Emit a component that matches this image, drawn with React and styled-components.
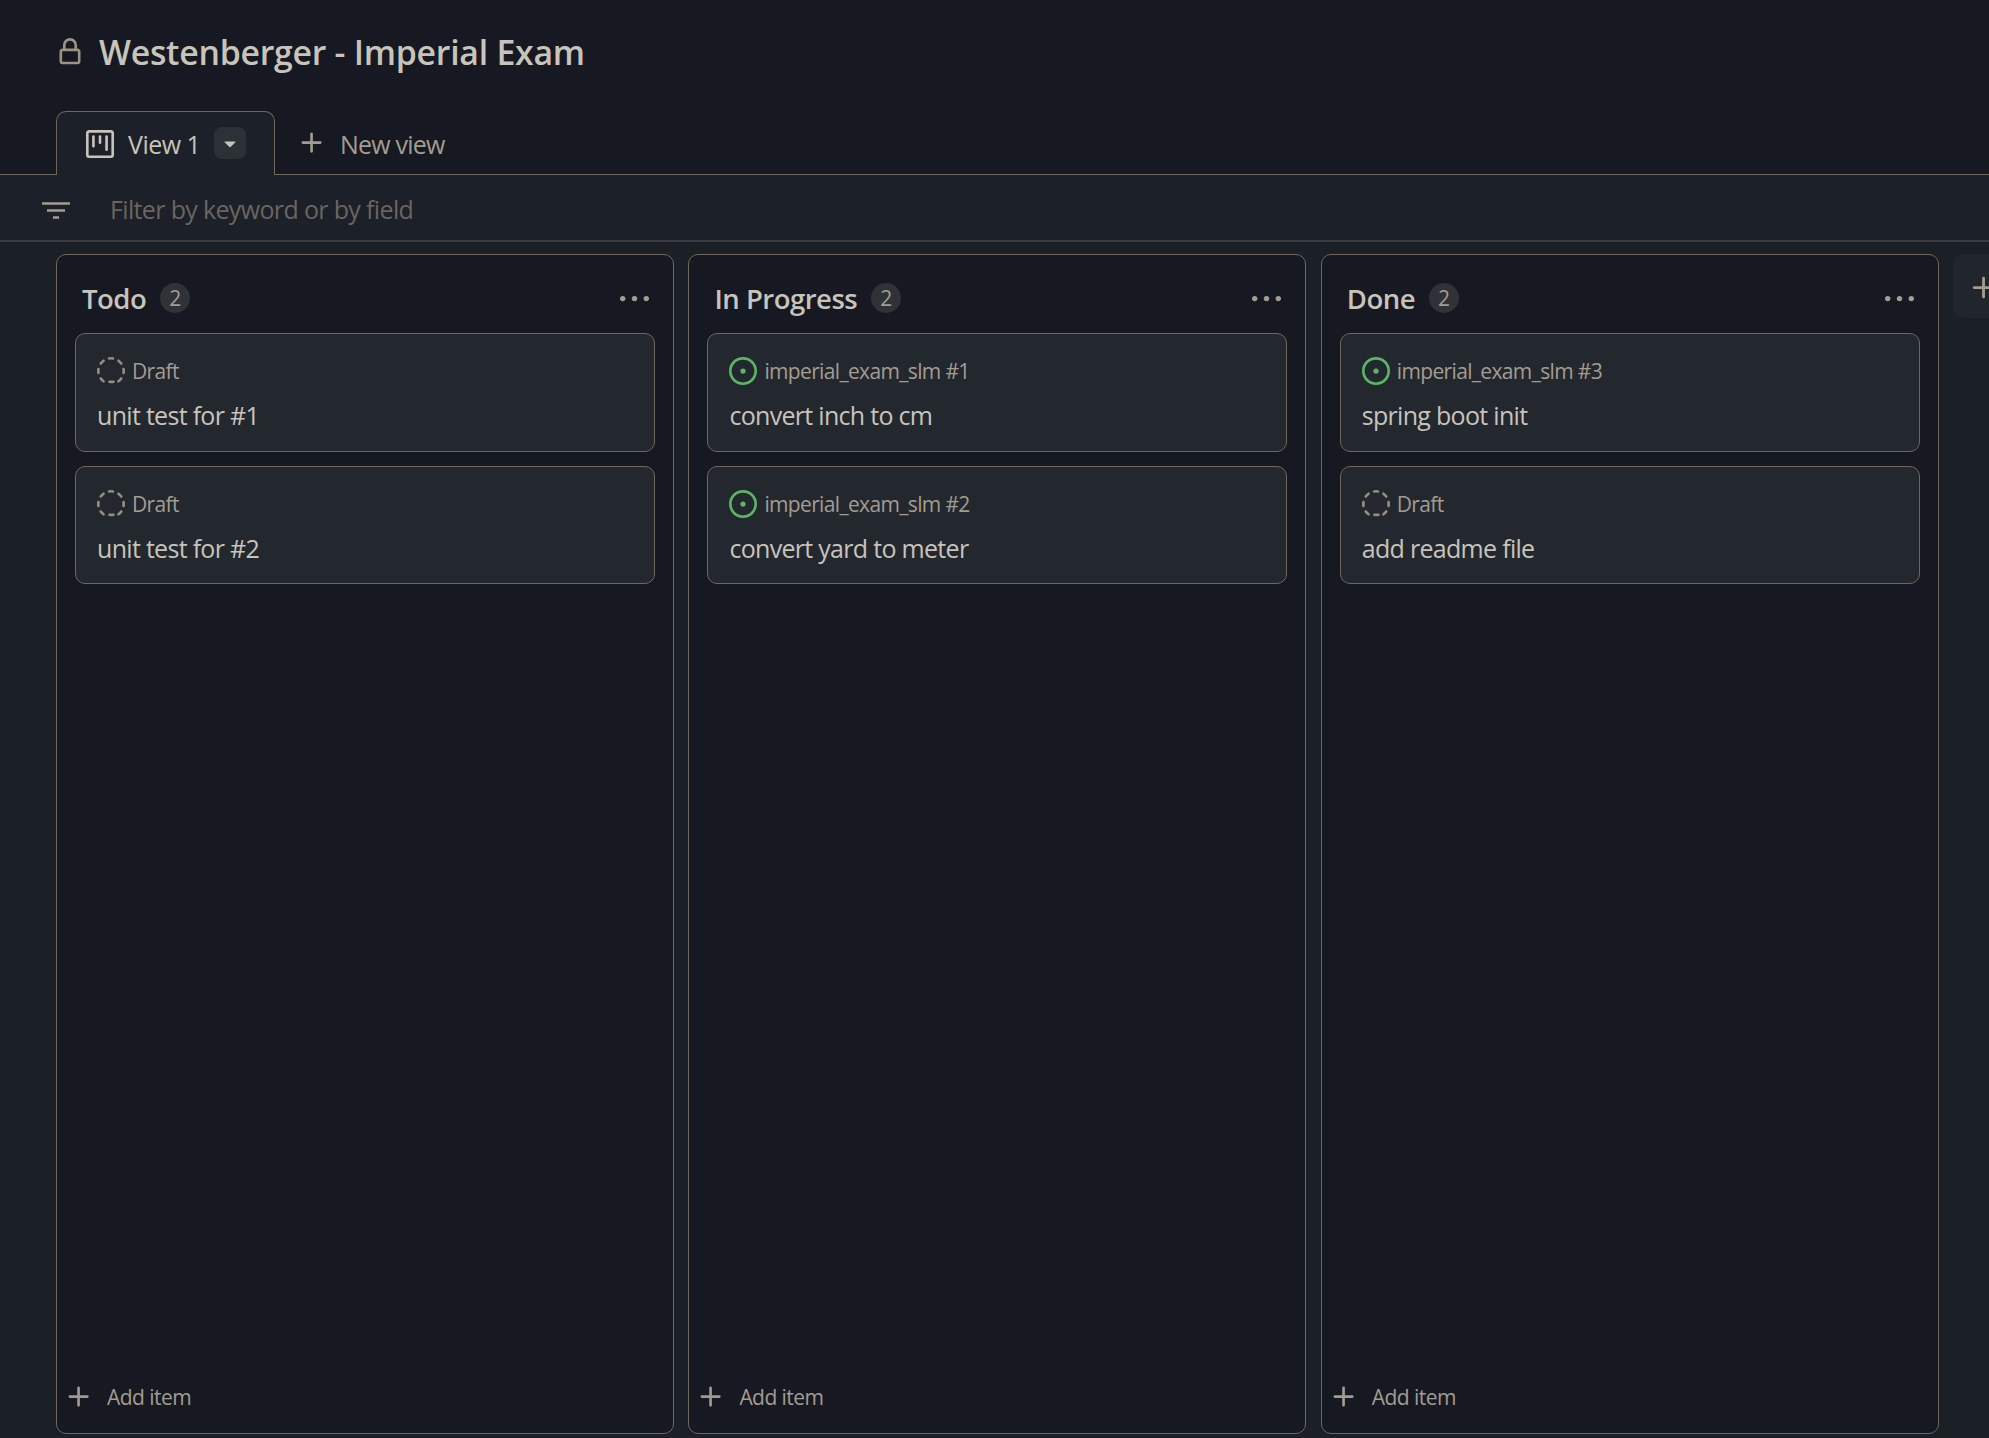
import React from "react";
import styled, { createGlobalStyle } from "styled-components";

const tan = "#6f6759";
const textColor = "#c8c3bb";
const mutedColor = "#a39c90";

const GlobalStyle = createGlobalStyle`
  html, body {
    margin: 0;
    padding: 0;
    background: #161921;
  }
  * {
    box-sizing: border-box;
  }
`;

// octicons, 16 unit grid
const paths = {
  lock: "M4 4a4 4 0 018 0v2h.25c.966 0 1.75.784 1.75 1.75v5.5A1.75 1.75 0 0112.25 15h-8.5A1.75 1.75 0 012 13.25v-5.5C2 6.784 2.784 6 3.75 6H4V4zm6.5 2V4a2.5 2.5 0 10-5 0v2h5zM12.25 7.5h-8.5a.25.25 0 00-.25.25v5.5c0 .138.112.25.25.25h8.5a.25.25 0 00.25-.25v-5.5a.25.25 0 00-.25-.25z",
  project:
    "M1.75 0h12.5C15.216 0 16 .784 16 1.75v12.5A1.75 1.75 0 0114.25 16H1.75A1.75 1.75 0 010 14.25V1.75C0 .784.784 0 1.75 0zM1.5 1.75v12.5c0 .138.112.25.25.25h12.5a.25.25 0 00.25-.25V1.75a.25.25 0 00-.25-.25H1.75a.25.25 0 00-.25.25zM11.75 3a.75.75 0 01.75.75v7.5a.75.75 0 01-1.5 0v-7.5a.75.75 0 01.75-.75zm-8.25.75a.75.75 0 011.5 0v5.5a.75.75 0 01-1.5 0v-5.5zM8 3a.75.75 0 01.75.75v3.5a.75.75 0 01-1.5 0v-3.5A.75.75 0 018 3z",
  triangle:
    "M4.427 7.427l3.396 3.396a.25.25 0 00.354 0l3.396-3.396A.25.25 0 0011.396 7H4.604a.25.25 0 00-.177.427z",
  plus: "M7.75 2a.75.75 0 01.75.75V7h4.25a.75.75 0 010 1.5H8.5v4.25a.75.75 0 01-1.5 0V8.5H2.75a.75.75 0 010-1.5H7V2.75A.75.75 0 017.75 2z",
  kebab:
    "M8 9a1.5 1.5 0 100-3 1.5 1.5 0 000 3zM1.5 9a1.5 1.5 0 100-3 1.5 1.5 0 000 3zm13 0a1.5 1.5 0 100-3 1.5 1.5 0 000 3z",
  open: "M8 9.5a1.5 1.5 0 100-3 1.5 1.5 0 000 3zM8 0a8 8 0 110 16A8 8 0 018 0zM1.5 8a6.5 6.5 0 1013 0 6.5 6.5 0 00-13 0z",
  draft:
    "M14.307 11.655a.75.75 0 01.165 1.048 8.05 8.05 0 01-1.769 1.77.75.75 0 01-.883-1.214 6.552 6.552 0 001.44-1.439.75.75 0 011.047-.165zm-2.652-9.962a.75.75 0 011.048-.165 8.05 8.05 0 011.77 1.769.75.75 0 01-1.214.883 6.552 6.552 0 00-1.439-1.44.75.75 0 01-.165-1.047zM6.749.097a8.074 8.074 0 012.502 0 .75.75 0 11-.233 1.482 6.558 6.558 0 00-2.036 0A.751.751 0 016.749.097zM.955 6.125a.75.75 0 01.624.857 6.558 6.558 0 000 2.036.75.75 0 11-1.482.233 8.074 8.074 0 010-2.502.75.75 0 01.858-.624zm14.09 0a.75.75 0 01.858.624 8.074 8.074 0 010 2.502.75.75 0 11-1.482-.233 6.558 6.558 0 000-2.036.75.75 0 01.624-.857zm-13.352 5.53a.75.75 0 011.048.165 6.552 6.552 0 001.439 1.44.75.75 0 01-.883 1.212 8.05 8.05 0 01-1.77-1.769.75.75 0 01.166-1.048zm2.652-9.962A.75.75 0 014.18 2.74a6.556 6.556 0 00-1.44 1.44.75.75 0 01-1.212-.883 8.05 8.05 0 011.769-1.77.75.75 0 011.048.166zm2.04 12.346a.75.75 0 01.857-.624 6.558 6.558 0 002.036 0 .75.75 0 11.233 1.482 8.074 8.074 0 01-2.502 0 .75.75 0 01-.624-.858z",
};

const Octicon = ({ name, size, color }) => (
  <svg width={size} height={size} viewBox="0 0 16 16" fill={color} style={{ flex: "none" }}>
    <path fillRule="evenodd" d={paths[name]} />
  </svg>
);

const columns = [
  {
    name: "Todo",
    items: [
      { meta: "Draft", title: "unit test for #1" },
      { meta: "Draft", title: "unit test for #2" },
    ],
  },
  {
    name: "In Progress",
    items: [
      { meta: "imperial_exam_slm #1", title: "convert inch to cm", open: true },
      { meta: "imperial_exam_slm #2", title: "convert yard to meter", open: true },
    ],
  },
  {
    name: "Done",
    items: [
      { meta: "imperial_exam_slm #3", title: "spring boot init", open: true },
      { meta: "Draft", title: "add readme file" },
    ],
  },
];

const App = () => {
  return (
    <Page>
      <GlobalStyle />
      <Header>
        <Octicon name="lock" size={28} color="#9a9386" />
        <Title>Westenberger - Imperial Exam</Title>
      </Header>
      <TabBar>
        <Tab>
          <Octicon name="project" size={28} color={textColor} />
          <TabLabel>View 1</TabLabel>
          <CaretButton>
            <Octicon name="triangle" size={24} color={textColor} />
          </CaretButton>
        </Tab>
        <NewView>
          <Octicon name="plus" size={28} color={mutedColor} />
          <span>New view</span>
        </NewView>
      </TabBar>
      <FilterBar>
        <FilterIcon viewBox="0 0 28 17">
          <path d="M0 1.5h28M5 8.5h18M11 15.5h6" stroke={mutedColor} strokeWidth="2.4" />
        </FilterIcon>
        <FilterText>Filter by keyword or by field</FilterText>
      </FilterBar>
      <Board>
        {columns.map((column) => (
          <Column key={column.name}>
            <ColumnHeader>
              <ColumnName>{column.name}</ColumnName>
              <Count>2</Count>
              <Dots>
                <Octicon name="kebab" size={29} color={mutedColor} />
              </Dots>
            </ColumnHeader>
            <Cards>
              {column.items.map((item) => (
                <Card key={item.title}>
                  <Meta>
                    {item.open ? (
                      <Octicon name="open" size={28} color="#5cb565" />
                    ) : (
                      <Octicon name="draft" size={28} color="#948d80" />
                    )}
                    <span>{item.meta}</span>
                  </Meta>
                  <CardTitle>{item.title}</CardTitle>
                </Card>
              ))}
            </Cards>
            <AddItem>
              <Octicon name="plus" size={28} color={mutedColor} />
              <span>Add item</span>
            </AddItem>
          </Column>
        ))}
        <AddColumn>
          <Octicon name="plus" size={30} color={mutedColor} />
        </AddColumn>
      </Board>
    </Page>
  );
};

const Page = styled.div`
  height: 1438px;
  overflow: hidden;
  font-family: "Open Sans", "Noto Sans", sans-serif;
  color: ${textColor};
  background: #161921;
`;

const Header = styled.header`
  height: 111px;
  padding: 38px 0 0 56px;
  display: flex;
  align-items: flex-start;
  gap: 15px;
`;

const Title = styled.h1`
  margin: -8px 0 0;
  font-size: 33.8px;
  line-height: 44px;
  font-weight: 600;
  letter-spacing: -0.25px;
  color: ${textColor};
`;

const TabBar = styled.nav`
  height: 64px;
  padding-left: 56px;
  display: flex;
  border-bottom: 1px solid ${tan};
`;

const Tab = styled.div`
  width: 219px;
  height: 64px;
  padding: 0 0 0 29px;
  display: flex;
  align-items: center;
  background: #1c2028;
  border: 1px solid ${tan};
  border-bottom: none;
  border-radius: 10px 10px 0 0;
`;

const TabLabel = styled.span`
  margin: 1px 0 0 14px;
  font-size: 25px;
  letter-spacing: -0.5px;
`;

const CaretButton = styled.span`
  width: 32px;
  height: 32px;
  margin: -2px 0 0 14px;
  border-radius: 8px;
  background: #2c3138;
  display: flex;
  align-items: center;
  justify-content: center;
`;

const NewView = styled.div`
  margin-left: 23px;
  display: flex;
  align-items: center;
  gap: 14px;
  font-size: 25px;
  letter-spacing: -0.8px;
  color: ${mutedColor};

  span {
    margin-top: 2px;
  }
`;

const FilterBar = styled.div`
  height: 67px;
  padding: 3px 0 0 42px;
  display: flex;
  align-items: center;
  gap: 40px;
  background: #1c2028;
  border-bottom: 2px solid #3a3e44;
`;

const FilterIcon = styled.svg`
  width: 28px;
  height: 17px;
  margin-top: 3px;
`;

const FilterText = styled.span`
  font-size: 25px;
  letter-spacing: -0.65px;
  color: #6a655d;
`;

const Board = styled.main`
  height: 1197px;
  padding: 12px 0 0 56px;
  display: flex;
  gap: 14.4px;
  background: #1b1f26;
`;

const Column = styled.section`
  flex: none;
  width: 618px;
  height: 1180px;
  display: flex;
  flex-direction: column;
  background: #161921;
  border: 1px solid ${tan};
  border-radius: 10px;
`;

const ColumnHeader = styled.div`
  height: 78px;
  padding: 8px 24px 0 25px;
  display: flex;
  align-items: center;
  gap: 14px;
`;

const ColumnName = styled.h2`
  margin: 0;
  font-size: 27.5px;
  font-weight: 600;
  letter-spacing: -0.5px;
  color: ${textColor};
`;

const Count = styled.span`
  width: 30px;
  height: 30px;
  border-radius: 50%;
  background: #2f3338;
  font-size: 21px;
  display: flex;
  align-items: center;
  justify-content: center;
  color: ${mutedColor};
`;

const Dots = styled.span`
  margin: 2px 0 0 auto;
  display: flex;
`;

const Cards = styled.div`
  flex: 1;
  padding: 0 18px;
  display: flex;
  flex-direction: column;
  gap: 14px;
`;

const Card = styled.article`
  height: 119px;
  padding: 22px 21px 0;
  background: #23282f;
  border: 1px solid ${tan};
  border-radius: 10px;

  &:last-child {
    height: 118px;
  }
`;

const Meta = styled.div`
  height: 30px;
  display: flex;
  align-items: center;
  gap: 7px;
  font-size: 21px;
  letter-spacing: -0.65px;
  color: ${mutedColor};
`;

const CardTitle = styled.div`
  margin-top: 11.5px;
  font-size: 25px;
  line-height: 34px;
  letter-spacing: -0.7px;
  color: ${textColor};
`;

const AddItem = styled.div`
  height: 72px;
  padding: 0 0 0 8px;
  display: flex;
  align-items: center;
  gap: 14px;
  font-size: 21px;
  letter-spacing: -0.55px;
  color: ${mutedColor};
`;

const AddColumn = styled.div`
  flex: none;
  width: 60px;
  height: 64px;
  padding: 3px 0 0 16px;
  border-radius: 10px;
  background: #21262d;
  display: flex;
  align-items: center;
`;

export default App;
